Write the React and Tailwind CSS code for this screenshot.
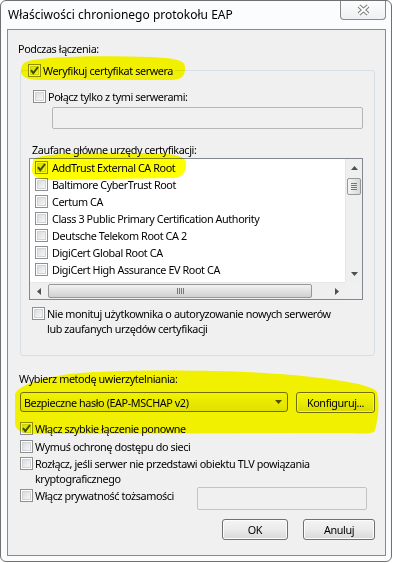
import React from "react";

const certs = [
  ["AddTrust External CA Root", true],
  ["Baltimore CyberTrust Root", false],
  ["Certum CA", false],
  ["Class 3 Public Primary Certification Authority", false],
  ["Deutsche Telekom Root CA 2", false],
  ["DigiCert Global Root CA", false],
  ["DigiCert High Assurance EV Root CA", false],
];

function Box({ checked }) {
  return (
    <span className="relative block w-[13px] h-[13px] shrink-0 border border-[#8e8f8f] bg-white">
      <span className="absolute inset-[1px] border border-[#d0d3d7] bg-gradient-to-br from-[#d9dce0] to-[#f7f7f7]" />
      {checked && (
        <svg className="absolute inset-0" width="11" height="11" viewBox="0 0 11 11">
          <path d="M2 5.2 L4.3 8.2 L9 2" fill="none" stroke="#3c4f86" strokeWidth="2" />
        </svg>
      )}
    </span>
  );
}

function Check({ checked, children, className = "" }) {
  return (
    <div className={"flex items-start gap-[2px] " + className}>
      <span className="mt-[1px] flex">
        <Box checked={checked} />
      </span>
      <div>{children}</div>
    </div>
  );
}

function Button({ children, className = "" }) {
  return (
    <div
      className={
        "flex items-center justify-center border border-[#707070] rounded-[3px] bg-gradient-to-b from-[#f4f4f4] via-[#ebebeb] to-[#d9d9d9] shadow-[inset_0_0_0_1px_#fcfcfc] " +
        className
      }
    >
      {children}
    </div>
  );
}

function Arrow({ dir }) {
  const d = {
    up: "M0 4 L3.5 0 L7 4 Z",
    down: "M0 0 L3.5 4 L7 0 Z",
    left: "M4 0 L0 3.5 L4 7 Z",
    right: "M0 0 L4 3.5 L0 7 Z",
  }[dir];
  const vert = dir === "up" || dir === "down";
  return (
    <svg width={vert ? 7 : 4} height={vert ? 4 : 7} viewBox={vert ? "0 0 7 4" : "0 0 4 7"}>
      <path d={d} fill="#4f4f4f" />
    </svg>
  );
}

function CertList() {
  return (
    <div className="ml-[8px] mt-[1px] w-[334px] h-[142px] border border-[#828790] bg-white flex flex-col">
      <div className="flex h-[123px]">
        <div className="flex-1 overflow-hidden">
          {certs.map(([name, on]) => (
            <div key={name} className="h-[17px] flex items-center pl-[5px] gap-[4px] whitespace-nowrap">
              <Box checked={on} />
              <span>{name}</span>
            </div>
          ))}
        </div>
        <div className="w-[17px] bg-[#efefef] border-l border-[#e6e6e6] flex flex-col">
          <div className="h-[17px] flex items-center justify-center">
            <Arrow dir="up" />
          </div>
          <div className="flex-1 pt-[2px]">
            <div className="mx-[1px] h-[17px] border border-[#979797] rounded-[2px] bg-gradient-to-r from-[#f4f4f4] to-[#d8d8d8] flex flex-col items-center justify-center gap-[1px]">
              <span className="w-[6px] h-px bg-[#777]" />
              <span className="w-[6px] h-px bg-[#777]" />
              <span className="w-[6px] h-px bg-[#777]" />
              <span className="w-[6px] h-px bg-[#777]" />
            </div>
          </div>
          <div className="h-[17px] flex items-center justify-center">
            <Arrow dir="down" />
          </div>
        </div>
      </div>
      <div className="flex h-[17px]">
        <div className="flex-1 bg-[#efefef] border-t border-[#e6e6e6] flex items-center">
          <div className="w-[17px] flex justify-center">
            <Arrow dir="left" />
          </div>
          <div className="ml-[1px] w-[264px] h-[14px] border border-[#979797] rounded-[2px] bg-gradient-to-b from-[#f2f2f2] to-[#d0d0d0] flex items-center justify-center gap-[1px]">
            <span className="w-px h-[6px] bg-[#777]" />
            <span className="w-px h-[6px] bg-[#777]" />
            <span className="w-px h-[6px] bg-[#777]" />
            <span className="w-px h-[6px] bg-[#777]" />
          </div>
          <div className="flex-1" />
          <div className="w-[17px] flex justify-center">
            <Arrow dir="right" />
          </div>
        </div>
        <div className="w-[17px] bg-[#f0f0f0]" />
      </div>
    </div>
  );
}

function Highlights() {
  return (
    <svg className="absolute inset-0 pointer-events-none mix-blend-multiply" width="393" height="563" viewBox="0 0 393 563">
      <g fill="#ffff00">
        <path d="M24,63 C30,57 90,55 150,57 C175,58 186,60 185,68 C185,76 182,80 170,80 L40,80 C26,80 20,76 21,70 C21,67 22,65 24,63 Z" />
        <path d="M33,160 C35,154 80,152 140,153 C170,153 186,155 186,163 C186,172 184,178 170,178 L50,180 C38,180 32,176 32,170 Z" />
        <path d="M15,395 C16,386 40,378 70,374 C120,369 230,370 280,374 C330,378 372,384 377,392 C380,405 378,420 375,430 C374,434 365,434 350,433 L40,434 C25,434 16,432 15,424 Z" />
      </g>
    </svg>
  );
}

export default function App() {
  return (
    <div className="relative w-[393px] h-[563px] bg-white overflow-hidden font-['Noto_Sans',sans-serif] text-[10.8px] leading-[15px] text-black">
      <div className="w-[392px] h-[562px] flex flex-col border border-[#707070] rounded-[6px] bg-[#fbfcfd]">
        <div className="h-[28px] shrink-0 flex justify-between items-start">
          <div className="pl-[7px] pt-[6px] text-[12px] leading-[16px]">Właściwości chronionego protokołu EAP</div>
          <div className="mr-[5px] w-[46px] h-[19px] border border-t-0 border-[#8a8a8a] rounded-b-[4px] bg-gradient-to-b from-[#fdfdfd] to-[#eef0f3] flex items-center justify-center">
            <svg width="13" height="12" viewBox="0 0 13 12">
              <path d="M2 2 L11 10 M11 2 L2 10" stroke="#7b7b7b" strokeWidth="4" />
              <path d="M2 2 L11 10 M11 2 L2 10" stroke="#ffffff" strokeWidth="2" />
            </svg>
          </div>
        </div>

        <div className="flex-1 ml-[6px] mr-[5px] mb-[5px] border border-[#8a8a8a] bg-[#f0f0f0] flex flex-col tracking-[-0.4px]">
          <div className="mt-[11px] ml-[10px]">Podczas łączenia:</div>

          <div className="relative mt-[14px] ml-[12px] w-[355px] border border-[#d5dfe5] rounded-[3px] pb-[19px]">
            <div className="absolute -top-[8px] left-[7px] bg-[#f0f0f0] pr-[2px]">
              <Check checked>Weryfikuj certyfikat serwera</Check>
            </div>
            <Check className="mt-[18px] ml-[12px]">Połącz tylko z tymi serwerami:</Check>
            <div className="mt-[3px] ml-[31px] w-[311px] h-[22px] border border-[#b5b5b5] rounded-[2px] bg-[#f0f0f0]" />
            <div className="mt-[13px] ml-[11px]">Zaufane główne urzędy certyfikacji:</div>
            <CertList />
            <Check className="mt-[6px] ml-[11px]">
              Nie monituj użytkownika o autoryzowanie nowych serwerów
              <br />
              lub zaufanych urzędów certyfikacji
            </Check>
          </div>

          <div className="mt-[15px] ml-[11px]">Wybierz metodę uwierzytelniania:</div>
          <div className="mt-[6px] ml-[12px] mr-[10px] flex items-start gap-[8px]">
            <div className="w-[268px] h-[20px] border border-[#707070] rounded-[3px] bg-gradient-to-b from-[#f2f2f2] to-[#e0e0e0] flex items-center justify-between pl-[3px] pr-[5px]">
              <span>Bezpieczne hasło (EAP-MSCHAP v2)</span>
              <Arrow dir="down" />
            </div>
            <Button className="w-[79px] h-[21px]">Konfiguruj...</Button>
          </div>

          <div className="ml-[12px] mr-[18px] flex flex-col">
            <Check checked className="mt-[8px]">Włącz szybkie łączenie ponowne</Check>
            <Check className="mt-[3px]">Wymuś ochronę dostępu do sieci</Check>
            <Check className="mt-[2px]">
              Rozłącz, jeśli serwer nie przedstawi obiektu TLV powiązania
              <br />
              kryptograficznego
            </Check>
            <div className="mt-[1px] flex justify-between items-start">
              <Check className="mt-[1px]">Włącz prywatność tożsamości</Check>
              <div className="w-[170px] h-[23px] border border-[#c3c3c3] rounded-[2px] bg-[#f0f0f0]" />
            </div>
          </div>

          <div className="mt-[9px] mr-[10px] flex justify-end gap-[15px]">
            <Button className="w-[66px] h-[21px]">OK</Button>
            <Button className="w-[72px] h-[21px]">Anuluj</Button>
          </div>
        </div>
      </div>
      <Highlights />
    </div>
  );
}
